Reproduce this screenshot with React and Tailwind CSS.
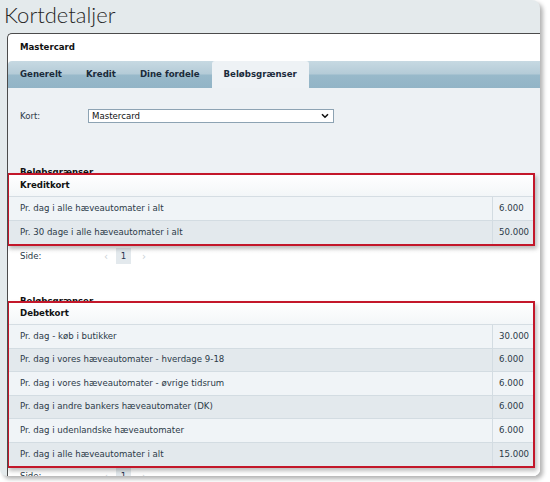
import React from 'react';

const KREDIT = [
  ['Pr. dag i alle hæveautomater i alt', '6.000'],
  ['Pr. 30 dage i alle hæveautomater i alt', '50.000'],
];

const DEBET = [
  ['Pr. dag - køb i butikker', '30.000'],
  ['Pr. dag i vores hæveautomater - hverdage 9-18', '6.000'],
  ['Pr. dag i vores hæveautomater - øvrige tidsrum', '6.000'],
  ['Pr. dag i andre bankers hæveautomater (DK)', '6.000'],
  ['Pr. dag i udenlandske hæveautomater', '6.000'],
  ['Pr. dag i alle hæveautomater i alt', '15.000'],
];

const TABS = ['Generelt', 'Kredit', 'Dine fordele', 'Beløbsgrænser'];

function LimitBox({ title, rows }) {
  return (
    <div className="relative z-10 ml-[-1px] w-[528px] border-2 border-[#c3172a] bg-white shadow-[2px_3px_4px_rgba(0,0,0,0.25)]">
      <div className="h-[22px] flex items-center pl-[11px] font-bold text-[#111] bg-[linear-gradient(to_bottom,#ffffff,#f3f6f8)] border-b border-[#d5dde3]">
        {title}
      </div>
      {rows.map(([label, value], i) => (
        <div
          key={i}
          className={`flex h-[23.5px] border-b last:border-b-0 border-[#d3dce2] text-[#2b3a48] ${
            i % 2 === 0 ? 'bg-[#f0f4f7]' : 'bg-[#e3e9ed]'
          }`}
        >
          <div className="flex-1 flex items-center pl-[11px]">{label}</div>
          <div className="w-[41px] flex items-center pl-[6px] border-l border-[#d3dce2]">{value}</div>
        </div>
      ))}
    </div>
  );
}

function Pager() {
  return (
    <div className="flex items-center h-[18px] pl-[12px] text-[#2b3a48]">
      <span className="w-[84px]">Side:</span>
      <span className="w-[12px] text-[#c9d0d5] text-[10px]">‹</span>
      <span className="w-[15px] h-[16px] flex items-center justify-center bg-[#e3e9ed] text-[#1f3550]">1</span>
      <span className="ml-[11px] text-[#c9d0d5] text-[10px]">›</span>
    </div>
  );
}

export default function App() {
  return (
    <div className="w-[550px] h-[482px] bg-white overflow-hidden text-[8.6px] font-['DejaVu_Sans',Verdana,sans-serif]">
      <div className="w-[540px] h-[476px] bg-[#e4eaec] rounded-tr-[8px] rounded-b-[7px] shadow-[3px_3px_4px_rgba(0,0,0,0.3)] flex flex-col overflow-hidden">
        <h1 className="shrink-0 h-[33px] pl-[4px] text-[22px] leading-[29px] font-light text-[#262626] font-['Lato',sans-serif]">
          Kortdetaljer
        </h1>
        <div className="ml-[7px] flex-1 min-h-0 flex flex-col border-l border-t border-[#4b4b4b] rounded-tl-[5px] bg-white overflow-hidden">
          <div className="shrink-0 h-[27px] flex items-center pl-[12px] font-bold text-[#111]">Mastercard</div>
          <div className="shrink-0 h-[27px] flex rounded-tl-[4px] bg-[linear-gradient(to_bottom,#c7d9e2_0%,#b4cbd7_48%,#98b9ca_52%,#92b4c6_100%)]">
            {TABS.map((t, i) => (
              <div
                key={t}
                className={`h-full flex items-center px-[12px] font-bold text-[#1b2b3b] ${
                  i === TABS.length - 1 ? 'bg-[#eef2f5] rounded-t-[3px]' : ''
                }`}
              >
                {t}
              </div>
            ))}
          </div>
          <div className="shrink-0 flex flex-col bg-[linear-gradient(to_bottom,#edf1f4_0px,#edf1f4_85px,#ffffff_165px)] pb-[40px]">
            <div className="flex items-center mt-[21px] pl-[12px] text-[#2b3a48]">
              <span className="w-[68px]">Kort:</span>
              <div className="w-[246px] h-[14px] flex items-center justify-between bg-white border border-[#8da3b3] pl-[3px] pr-[4px] text-[#111]">
                <span>Mastercard</span>
                <svg width="8" height="6" viewBox="0 0 8 6">
                  <path d="M1 1.2 L4 4.2 L7 1.2" fill="none" stroke="#111" strokeWidth="1.6" />
                </svg>
              </div>
            </div>
            <div className="mt-[43px] pl-[12px] font-bold text-[#111] leading-[12px]">Beløbsgrænser,</div>
            <div className="mt-[-5px]">
              <LimitBox title="Kreditkort" rows={KREDIT} />
            </div>
            <div className="mt-[1px]">
              <Pager />
            </div>
            <div className="mt-[30px] pl-[12px] font-bold text-[#111] leading-[12px]">Beløbsgrænser,</div>
            <div className="mt-[-6px]">
              <LimitBox title="Debetkort" rows={DEBET} />
            </div>
            <div className="mt-[-1px]">
              <Pager />
            </div>
          </div>
        </div>
      </div>
    </div>
  );
}
